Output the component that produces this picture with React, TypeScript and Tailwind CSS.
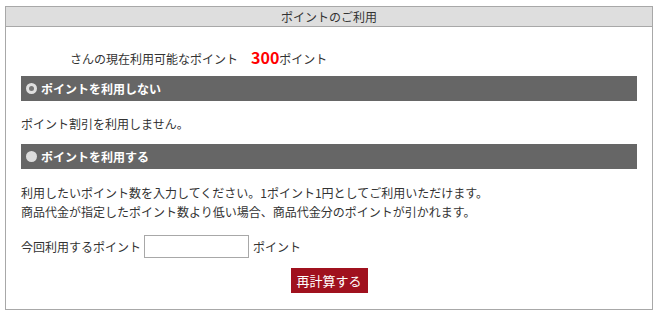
import React from "react";

export default function App() {
  return (
    <div
      className="w-[658px] h-[316px] bg-white pt-[6px] pl-[5px] text-[12px] text-[#333]"
      style={{ fontFamily: '"Noto Sans CJK JP", "Noto Sans", sans-serif' }}
    >
      <div className="w-[648px] h-[304px] border border-[#a8a8a8]">
        <div className="h-[20px] bg-[#dedede] border-b border-[#a8a8a8] flex items-center justify-center leading-none">
          ポイントのご利用
        </div>
        <div className="px-[15px]">
          <div className="h-[49px] flex items-end pb-[11px] pl-[49px] leading-none">
            <span>さんの現在利用可能なポイント</span>
            <span className="ml-[13px] text-[16px] font-bold text-[#ff0000] leading-none">300</span>
            <span>ポイント</span>
          </div>
          <div className="h-[25px] bg-[#666666] flex items-center pl-[5px] text-white font-bold leading-none">
            <span className="w-[11px] h-[11px] rounded-full border-[3px] border-[#e0e0e0] bg-[#777] mr-[4px]" />
            ポイントを利用しない
          </div>
          <div className="h-[43px] flex items-center pt-[3px] leading-none">ポイント割引を利用しません。</div>
          <div className="h-[25px] bg-[#666666] flex items-center pl-[5px] text-white font-bold leading-none">
            <span className="w-[11px] h-[11px] rounded-full bg-[#dcdcdc] mr-[4px]" />
            ポイントを利用する
          </div>
          <div className="pt-[14px] leading-[19px]">
            <p>利用したいポイント数を入力してください。1ポイント1円としてご利用いただけます。</p>
            <p>商品代金が指定したポイント数より低い場合、商品代金分のポイントが引かれます。</p>
          </div>
          <div className="mt-[14px] flex items-center">
            <span>今回利用するポイント</span>
            <input
              type="text"
              className="ml-[3px] mr-[4px] w-[105px] h-[23px] border border-[#a8a8a8] bg-white outline-none"
            />
            <span>ポイント</span>
          </div>
          <div className="mt-[10px] flex justify-center">
            <button className="w-[77px] h-[25px] bg-[#a0111e] text-white text-[13px] leading-none">
              再計算する
            </button>
          </div>
        </div>
      </div>
    </div>
  );
}
